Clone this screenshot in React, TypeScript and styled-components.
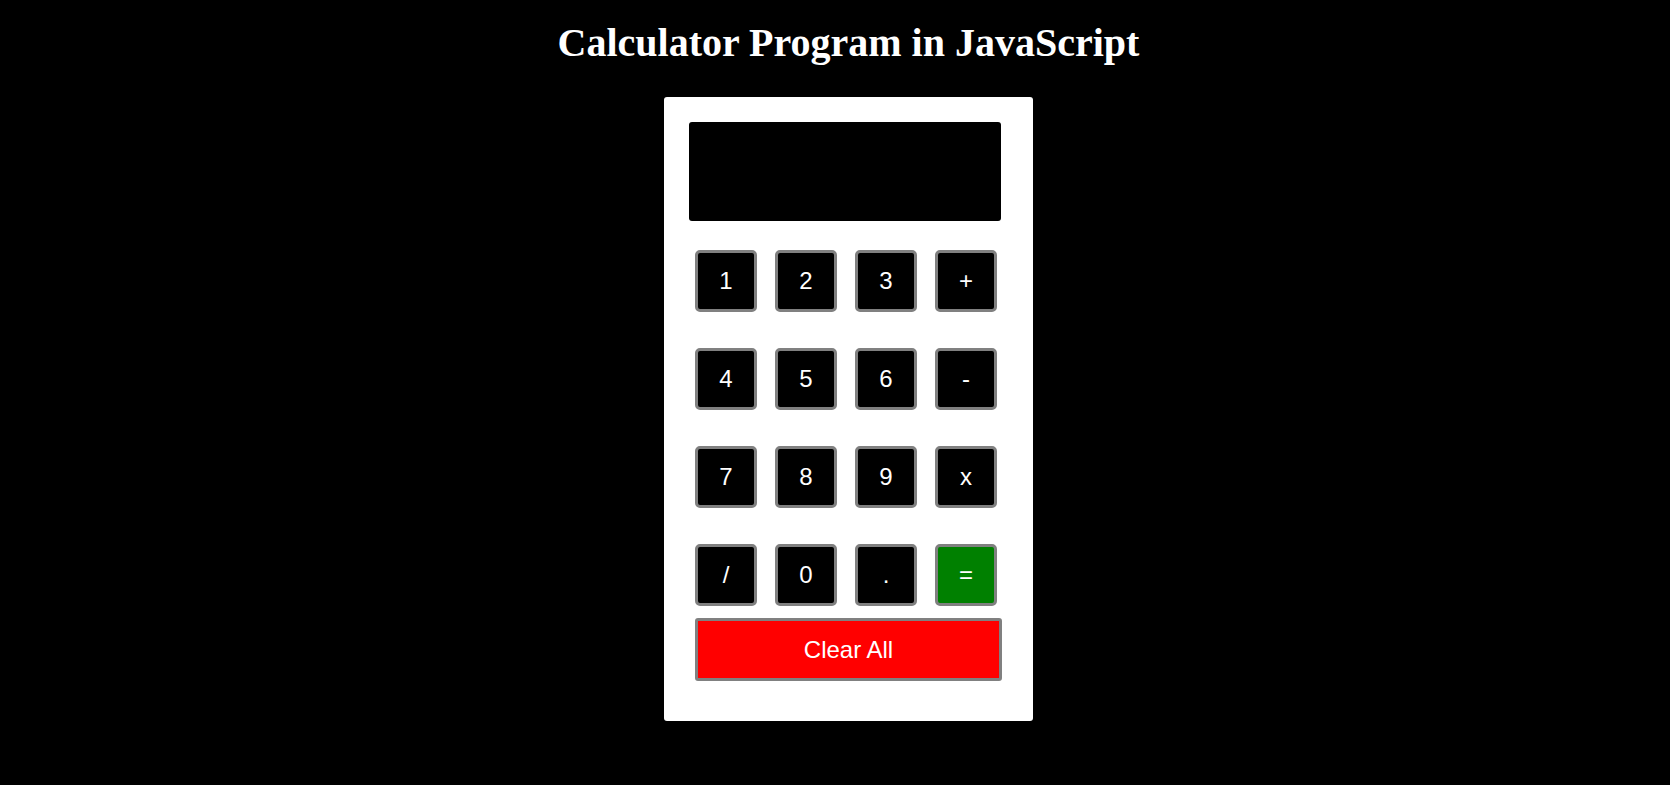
import React from "react";
import styled, { createGlobalStyle } from "styled-components";

const Global = createGlobalStyle`
  html, body { margin: 0; padding: 0; background: #000; }
  body { font-family: "Liberation Serif", "Times New Roman", serif; }
`;

const Page = styled.div`
  display: flex;
  flex-direction: column;
  align-items: center;
  padding: 20px 0 0 27px;
`;

const Title = styled.h1`
  margin: 0 0 31px;
  font-family: "Liberation Serif", "Times New Roman", serif;
  font-weight: bold;
  font-size: 40px;
  line-height: 46px;
  color: #fff;
`;

const Card = styled.div`
  width: 312px;
  padding: 25px 32px 40px 25px;
  background: #fff;
  border-radius: 3px;
`;

const Display = styled.div`
  height: 99px;
  background: #000;
  border-radius: 3px;
`;

const Keys = styled.div`
  display: grid;
  grid-template-columns: repeat(4, 62px);
  grid-auto-rows: 62px;
  column-gap: 18px;
  row-gap: 36px;
  margin: 29px 0 0 6px;
`;

const Key = styled.button<{ $bg?: string }>`
  box-sizing: border-box;
  width: 62px;
  height: 62px;
  padding: 0;
  background: ${(p) => p.$bg ?? "#000"};
  color: #fff;
  border: 3px solid #808080;
  border-radius: 5px;
  font-family: "Liberation Sans", Arial, sans-serif;
  font-size: 24px;
  cursor: pointer;
`;

const Clear = styled.button`
  box-sizing: border-box;
  display: block;
  width: 307px;
  height: 63px;
  margin: 12px 0 0 6px;
  padding: 0;
  background: #ff0000;
  color: #fff;
  border: 3px solid #808080;
  border-radius: 3px;
  font-family: "Liberation Sans", Arial, sans-serif;
  font-size: 24px;
  cursor: pointer;
`;

const keys = ["1", "2", "3", "+", "4", "5", "6", "-", "7", "8", "9", "x", "/", "0", ".", "="];

export default function App() {
  return (
    <>
      <Global />
      <Page>
        <Title>Calculator Program in JavaScript</Title>
        <Card>
          <Display />
          <Keys>
            {keys.map((k) => (
              <Key key={k} $bg={k === "=" ? "#008000" : undefined}>
                {k}
              </Key>
            ))}
          </Keys>
          <Clear>Clear All</Clear>
        </Card>
      </Page>
    </>
  );
}
